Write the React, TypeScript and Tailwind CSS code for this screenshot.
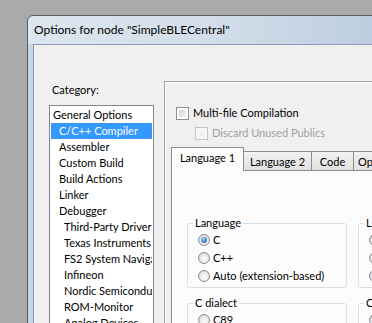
import React from 'react';

const categories = [
  { label: 'General Options', level: 0 },
  { label: 'C/C++ Compiler', level: 1, selected: true },
  { label: 'Assembler', level: 1 },
  { label: 'Custom Build', level: 1 },
  { label: 'Build Actions', level: 1 },
  { label: 'Linker', level: 1 },
  { label: 'Debugger', level: 1 },
  { label: 'Third-Party Driver', level: 2 },
  { label: 'Texas Instruments', level: 2 },
  { label: 'FS2 System Navigator', level: 2 },
  { label: 'Infineon', level: 2 },
  { label: 'Nordic Semiconductor', level: 2 },
  { label: 'ROM-Monitor', level: 2 },
  { label: 'Analog Devices', level: 2 },
];

const INDENT = ['pl-[2px]', 'pl-[8px]', 'pl-[13px]'];

function Checkbox({ disabled }: { disabled?: boolean }) {
  return (
    <div
      className={
        disabled
          ? 'w-[13px] h-[13px] shrink-0 border border-[#c4c4c4] bg-[#f7f7f7] p-[2px]'
          : 'w-[13px] h-[13px] shrink-0 border border-[#8e8f8f] bg-white p-[2px]'
      }
    >
      <div
        className={
          disabled
            ? 'w-full h-full bg-[#f0f0f0]'
            : 'w-full h-full bg-[linear-gradient(135deg,#cfd1d4,#f4f4f4)]'
        }
      />
    </div>
  );
}

function Radio({ checked }: { checked?: boolean }) {
  return (
    <div className="w-[12px] h-[12px] shrink-0 rounded-full border border-[#8b8e92] bg-[radial-gradient(circle_at_55%_60%,#f7f7f7_20%,#d2d4d6_90%)] flex items-center justify-center">
      {checked && (
        <div className="w-[6px] h-[6px] rounded-full bg-[radial-gradient(circle_at_40%_35%,#9fd8ff,#2a6fb0_70%,#174e86)]" />
      )}
    </div>
  );
}

function RadioRow({ label, checked }: { label: string; checked?: boolean }) {
  return (
    <div className="flex items-center h-[18px] gap-[3px] ml-[5px] whitespace-nowrap">
      <Radio checked={checked} />
      <span>{label}</span>
    </div>
  );
}

function GroupBox({ title, children }: { title: string; children: React.ReactNode }) {
  return (
    <fieldset className="w-[160px] shrink-0 rounded-[3px] border border-[#d5dfe5] pl-[5px] pb-[2px] shadow-[inset_1px_1px_0_#fff]">
      <legend className="px-[2px] leading-[16px]">{title}</legend>
      {children}
    </fieldset>
  );
}

export default function App() {
  return (
    <div className="h-[323px] w-[372px] overflow-hidden bg-[#aaaaaa] pl-[27px] pt-[15px] font-['Lato',sans-serif] text-[11px] leading-[16px] text-black">
      <div className="w-[540px] h-[420px] rounded-t-[6px] border border-[#555e69] bg-[#c6d5e6] flex flex-col">
        {/* title bar */}
        <div className="h-[28px] shrink-0 flex items-center pl-[6px] text-[12px] rounded-t-[6px] bg-[linear-gradient(90deg,#dde6ef_0%,#d2dde9_35%,#b8cbde_70%,#b3c7db_100%)]">
          Options for node "SimpleBLECentral"
        </div>

        {/* client area */}
        <div className="flex-1 ml-[5px] border border-[#8d9db1] bg-[#f0f0f0] flex gap-[10px] pl-[15px] pt-[36px]">
          {/* category column */}
          <div className="w-[105px] shrink-0 pt-[1px]">
            <div className="h-[16px] pl-[3px]">Category:</div>
            <div className="mt-[7px] h-[300px] border border-[#828790] bg-white p-[1px] overflow-hidden">
              {categories.map((c) => (
                <div
                  key={c.label}
                  className={
                    (c.selected ? 'bg-[#3399ff] text-white ' : '') +
                    INDENT[c.level] +
                    ' h-[16px] whitespace-nowrap overflow-hidden'
                  }
                >
                  {c.label}
                </div>
              ))}
            </div>
          </div>

          {/* options frame */}
          <div className="flex-1 flex flex-col border border-[#a0a0a0] shadow-[inset_1px_1px_0_#fff] pl-[6px] pt-[22px]">
            <div className="ml-[5px] flex items-center h-[18px] gap-[4px]">
              <Checkbox />
              <span>Multi-file Compilation</span>
            </div>
            <div className="ml-[24px] mt-[2px] flex items-center h-[18px] gap-[4px] text-[#a0a0a0]">
              <Checkbox disabled />
              <span>Discard Unused Publics</span>
            </div>

            {/* tabs */}
            <div className="mt-[5px] -mb-px flex items-end h-[24px]">
              <div className="relative z-10 w-[73px] h-[24px] border border-b-0 border-[#898c95] bg-[#fcfcfc] flex items-center justify-center pb-[3px]">
                Language 1
              </div>
              <div className="-ml-px w-[69px] h-[20px] border border-b-0 border-[#898c95] bg-[linear-gradient(#f2f2f2,#e0e0e0)] flex items-center justify-center">
                Language 2
              </div>
              <div className="-ml-px w-[43px] h-[20px] border border-b-0 border-[#898c95] bg-[linear-gradient(#f2f2f2,#e0e0e0)] flex items-center justify-center">
                Code
              </div>
              <div className="-ml-px w-[60px] h-[20px] border border-b-0 border-[#898c95] bg-[linear-gradient(#f2f2f2,#e0e0e0)] flex items-center pl-[4px]">
                Optimizations
              </div>
            </div>

            {/* tab panel */}
            <div className="flex-1 border-t border-l border-[#898c95] bg-[#fcfcfc] pl-[15px] pt-[44px]">
              <div className="flex gap-[11px]">
                <GroupBox title="Language">
                  <RadioRow label="C" checked />
                  <RadioRow label="C++" />
                  <RadioRow label="Auto (extension-based)" />
                </GroupBox>
                <GroupBox title="Language conformance">
                  <RadioRow label="Standard with IAR extensions" checked />
                  <RadioRow label="Standard" />
                  <RadioRow label="Strict" />
                </GroupBox>
              </div>
              <div className="flex gap-[11px] mt-[7px]">
                <GroupBox title="C dialect">
                  <RadioRow label="C89" />
                  <RadioRow label="C99" checked />
                </GroupBox>
                <GroupBox title="C++ dialect">
                  <RadioRow label="Embedded C++" checked />
                  <RadioRow label="Extended Embedded C++" />
                </GroupBox>
              </div>
            </div>
          </div>
        </div>
      </div>
    </div>
  );
}
